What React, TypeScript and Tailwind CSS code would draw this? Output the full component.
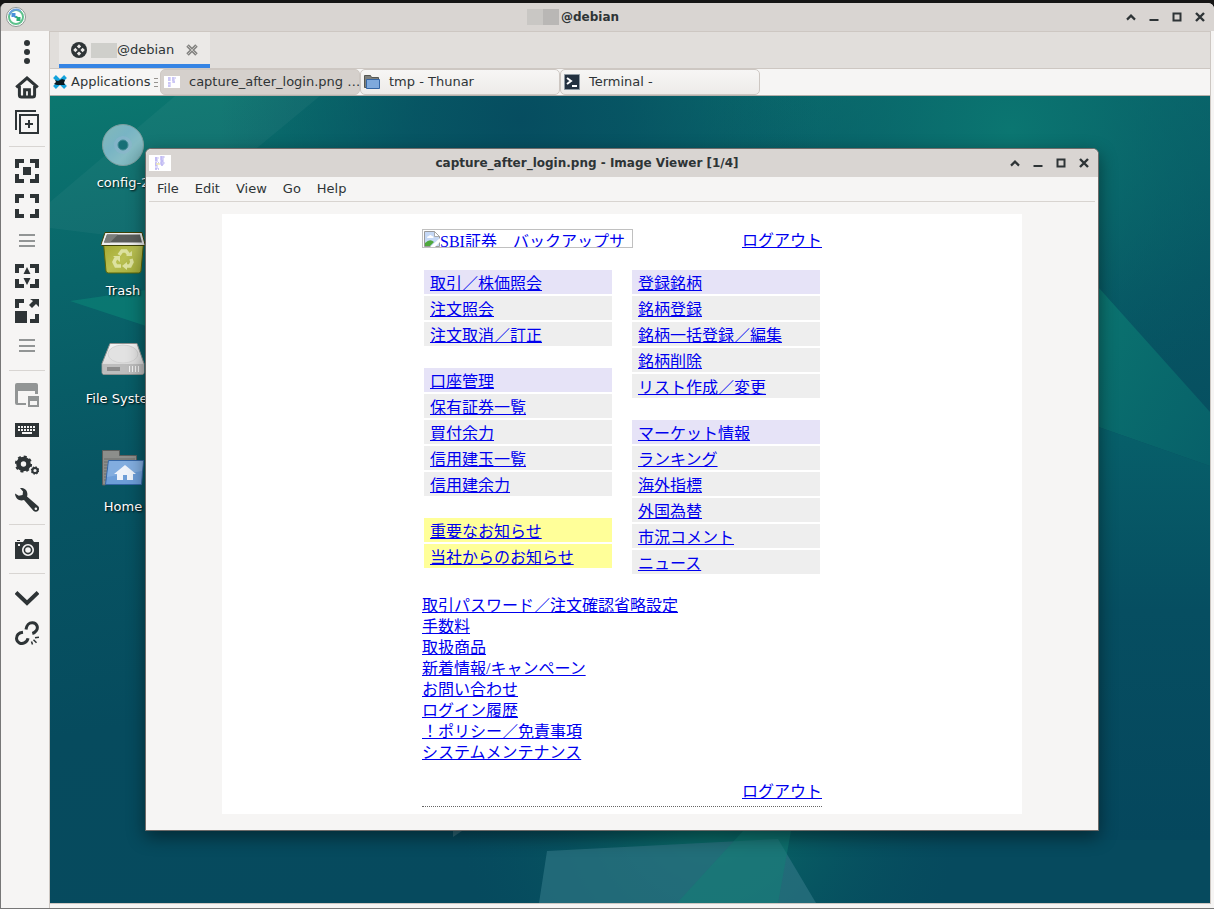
import React from "react";

interface LinkGroupProps {
  links: string[];
  tone?: "menu" | "notice";
}

interface SideButtonProps {
  label: string;
  muted?: boolean;
  children: React.ReactNode;
}

// \uFF0F, \uFF01 and \u3000 are the full-width slash, exclamation mark and space
const tradeLinks = ["取引\uFF0F株価照会", "注文照会", "注文取消\uFF0F訂正"];
const accountLinks = [
  "口座管理",
  "保有証券一覧",
  "買付余力",
  "信用建玉一覧",
  "信用建余力",
];
const noticeLinks = ["重要なお知らせ", "当社からのお知らせ"];
const watchLinks = [
  "登録銘柄",
  "銘柄登録",
  "銘柄一括登録\uFF0F編集",
  "銘柄削除",
  "リスト作成\uFF0F変更",
];
const marketLinks = [
  "マーケット情報",
  "ランキング",
  "海外指標",
  "外国為替",
  "市況コメント",
  "ニュース",
];
const footerLinks = [
  "取引パスワード\uFF0F注文確認省略設定",
  "手数料",
  "取扱商品",
  "新着情報/キャンペーン",
  "お問い合わせ",
  "ログイン履歴",
  "\uFF01ポリシー\uFF0F免責事項",
  "システムメンテナンス",
];

const WindowButtons = () => (
  <div className="flex shrink-0 text-[#2e3436]">
    <button aria-label="Shade" className="flex w-[23px] h-7 items-center justify-center">
      <svg width="10" height="10" viewBox="0 0 10 10" fill="none" stroke="currentColor" strokeWidth="2.2">
        <path d="M1 7.6 L5 3.6 L9 7.6" />
      </svg>
    </button>
    <button aria-label="Minimize" className="flex w-[23px] h-7 items-center justify-center">
      <svg width="10" height="10" viewBox="0 0 10 10" fill="currentColor">
        <path d="M0.5 7h9v2h-9z" />
      </svg>
    </button>
    <button aria-label="Maximize" className="flex w-[23px] h-7 items-center justify-center">
      <svg width="10" height="10" viewBox="0 0 10 10" fill="none" stroke="currentColor" strokeWidth="2">
        <path d="M1.5 1.5h7v7h-7z" />
      </svg>
    </button>
    <button aria-label="Close" className="flex w-[23px] h-7 items-center justify-center">
      <svg width="10" height="10" viewBox="0 0 10 10" fill="none" stroke="currentColor" strokeWidth="2.4">
        <path d="M1 1 L9 9 M9 1 L1 9" />
      </svg>
    </button>
  </div>
);

const Thumbnail = () => (
  <svg className="shrink-0" width="22" height="16" viewBox="0 0 22 16">
    <path fill="#fff" d="M0 0h22v16H0z" />
    <path fill="#dcd9f8" d="M6 2h3v5H6zM6 8h3v6H6zM11 1h4v9h-4z" />
    <path
      stroke="#b9b3f2"
      strokeWidth="1.4"
      strokeDasharray="2 1"
      fill="none"
      d="M6 3h3.5M6 5h3M6 8h4M6 10h3M6 14h4M11.5 2h4M11.5 4h3M12 6h3M11.5 8h4M12 10h3"
    />
    <path stroke="#f0eab0" strokeWidth="1.4" d="M7 9h4" />
  </svg>
);

const SideButton = ({ label, muted, children }: SideButtonProps) => (
  <button
    aria-label={label}
    className={`flex h-[35px] w-full items-center justify-center ${
      muted ? "text-[#929595]" : "text-[#2e3436]"
    }`}
  >
    <svg width="24" height="24" viewBox="0 0 24 24" fill="currentColor">
      {children}
    </svg>
  </button>
);

const SideDivider = () => <div className="mx-1 mt-[7px] mb-1.5 h-px bg-[#d8d5d2]" />;

const Corners = () => (
  <path d="M0 0h9v4H4v5H0zM15 0h9v9h-4V4h-5zM0 15h4v5h5v4H0zM20 15h4v9h-9v-4h5z" />
);

const Grip = () => <path d="M4 5h16v2H4zM4 11h16v2H4zM4 16h16v2H4z" />;

const Sidebar = () => (
  <aside className="w-[49px] shrink-0 border-r border-[#cdc7c2] bg-[#f6f5f4] pt-[3px] pl-1">
    <SideButton label="Menu">
      <circle cx="12" cy="3" r="3" />
      <circle cx="12" cy="12" r="3" />
      <circle cx="12" cy="21" r="3" />
    </SideButton>
    <SideButton label="Home">
      <path
        d="M1.2 12.4 L12 3 L22.8 12.4 M4.4 11v9q0 2 2 2h11.2q2 0 2-2v-9M9.6 21v-6.2h4.8V21"
        fill="none"
        stroke="currentColor"
        strokeWidth="3"
      />
    </SideButton>
    <SideButton label="New connection">
      <path
        d="M1 20V1h20M5 5h18v18H5zM10 14h8M14 10v8"
        fill="none"
        stroke="currentColor"
        strokeWidth="2"
      />
    </SideButton>
    <SideDivider />
    <SideButton label="Resize window">
      <Corners />
      <path d="M8 8h8v8H8z" />
    </SideButton>
    <SideButton label="Fullscreen">
      <Corners />
    </SideButton>
    <SideButton label="Fullscreen options" muted>
      <Grip />
    </SideButton>
    <SideButton label="Dynamic resolution">
      <Corners />
      <path d="M12 3l3.5 7h-7zM12 21l-3.5-7h7z" />
    </SideButton>
    <SideButton label="Scaled mode">
      <path d="M0 0h9v4H4v5H0zM0 12h12v12H0zM20 15h4v9h-9v-4h5zM15 0h9v8l-3-3-4 4-3-3 4-4z" />
    </SideButton>
    <SideButton label="Scaler options" muted>
      <Grip />
    </SideButton>
    <SideDivider />
    <SideButton label="Multi monitor" muted>
      <path d="M2 0h19q2 0 2 2v9h-3V8H3v12h8v2H2q-2 0-2-2V2Q0 0 2 0z" />
      <path fillRule="evenodd" d="M13 13h11v11H13zM15 18v4h7v-4z" />
    </SideButton>
    <SideButton label="Keyboard">
      <path d="M0 5h24v14H0z" />
      <path
        stroke="#f6f5f4"
        strokeWidth="2"
        strokeDasharray="2 1"
        fill="none"
        d="M3 9h18M3 12h18"
      />
      <path stroke="#f6f5f4" strokeWidth="2" d="M7 15h10" />
    </SideButton>
    <SideButton label="Preferences">
      <circle cx="8.5" cy="11" r="5" fill="none" stroke="currentColor" strokeWidth="4.600" />
      <circle
        cx="8.5"
        cy="11"
        r="7.6"
        fill="none"
        stroke="currentColor"
        strokeWidth="2"
        strokeDasharray="3 2.97"
      />
      <circle cx="20" cy="17.5" r="2.6" fill="none" stroke="currentColor" strokeWidth="2" />
      <circle
        cx="20"
        cy="17.5"
        r="3.6"
        fill="none"
        stroke="currentColor"
        strokeWidth="1.2"
        strokeDasharray="1.5 1.33"
      />
    </SideButton>
    <SideButton label="Tools">
      <path
        fillRule="evenodd"
        d="M5 0c4-.6 7.500 2.200 7.400 6.200 0 .9-.1 1.500-.4 2.200l11 9.600c1.600 1.500 1.300 3.600.2 4.800-1.200 1.300-3.400 1.500-4.800-.1L9 12c-4 1.500-8.600-.6-9-6.500l3.800 2.300L7.600 7 8 3.500zM20.800 19.500a1.300 1.300 0 1 0 .1 2.600 1.300 1.300 0 0 0-.1-2.600z"
      />
    </SideButton>
    <SideDivider />
    <SideButton label="Screenshot">
      <path
        fillRule="evenodd"
        d="M0 5h8l2-3h7l2 3h5v17H0zM3 7v2h2V7zM13 7a6 6 0 1 0 .01 0z"
      />
      <path d="M2 3h3v1H2z" />
      <circle cx="13" cy="13" r="3.6" fill="none" stroke="currentColor" strokeWidth="1.6" />
    </SideButton>
    <SideDivider />
    <SideButton label="Minimize session">
      <path d="M1 6.500 L12 17 L23 6.500" fill="none" stroke="currentColor" strokeWidth="4" />
    </SideButton>
    <SideButton label="Disconnect">
      <path
        d="M11 8.500c.5-4 3-7 6.500-6.800 4.500.3 6 5 3.800 8-1 1.500-2.200 2.300-4 2.800M8 11.200c-4 .5-6.500 3-6.500 6.300.2 4 4.500 6 7.800 4.400 2-.9 3.300-2.200 3.700-4.600"
        fill="none"
        stroke="currentColor"
        strokeWidth="3"
      />
      <path
        d="M16.500 20.500l1 3M18.500 18.800l3 3M20 16.800l4-.6"
        fill="none"
        stroke="currentColor"
        strokeWidth="1.5"
      />
    </SideButton>
  </aside>
);

const Wallpaper = () => (
  <svg
    className="absolute inset-0 h-full w-full"
    viewBox="50 96 1160 807"
    preserveAspectRatio="none"
    aria-hidden="true"
  >
    <defs>
      <linearGradient id="base" x1="0" y1="0" x2="0.250" y2="1">
        <stop offset="0" stopColor="#0b776f" />
        <stop offset="0.220" stopColor="#09656a" />
        <stop offset="0.450" stopColor="#075563" />
        <stop offset="0.750" stopColor="#064b5e" />
        <stop offset="1" stopColor="#064a5e" />
      </linearGradient>
      <radialGradient id="dip" gradientUnits="userSpaceOnUse" cx="520" cy="120" r="300">
        <stop offset="0" stopColor="#064d60" />
        <stop offset="0.350" stopColor="#064f61" stopOpacity="0.800" />
        <stop offset="1" stopColor="#064f61" stopOpacity="0" />
      </radialGradient>
      <radialGradient id="glow" gradientUnits="userSpaceOnUse" cx="1010" cy="130" r="290">
        <stop offset="0" stopColor="#0b7671" />
        <stop offset="0.300" stopColor="#0a6f6e" stopOpacity="0.800" />
        <stop offset="1" stopColor="#075a66" stopOpacity="0" />
      </radialGradient>
      <radialGradient id="low" gradientUnits="userSpaceOnUse" cx="710" cy="810" r="250">
        <stop offset="0" stopColor="#0a7069" />
        <stop offset="1" stopColor="#065260" stopOpacity="0" />
      </radialGradient>
      <linearGradient id="shard" x1="0" y1="0" x2="1" y2="1">
        <stop offset="0" stopColor="#0b7570" />
        <stop offset="1" stopColor="#076069" />
      </linearGradient>
      <linearGradient id="side" x1="0" y1="0" x2="0" y2="1">
        <stop offset="0" stopColor="#07606a" />
        <stop offset="0.450" stopColor="#064e61" />
        <stop offset="1" stopColor="#05475d" />
      </linearGradient>
    </defs>
    <path fill="url(#base)" d="M50 96h1160v807H50z" />
    <path fill="url(#dip)" d="M50 96h1160v807H50z" />
    <path fill="url(#glow)" d="M620 96h590v400H620z" />
    <path fill="url(#shard)" d="M1090 278 L1210 412 V466 L1090 424z" />
    <path fill="url(#side)" d="M1090 424 L1210 466 V840 H1090z" />
    <path fill="#fff" opacity="0.040" d="M50 202 L175 96 H320 L146 240 L50 228z" />
    <path fill="#0b8276" opacity="0.650" d="M70 301 L146 290 V326z" />
    <path fill="url(#low)" d="M400 820h600v83H400z" />
    <path fill="#2b7180" opacity="0.750" d="M547 851 L778 839 L816 903 H539z" />
    <path fill="#118075" opacity="0.500" d="M743 831 H791 L778 903 H677z" />
    <path fill="#56858f" opacity="0.500" d="M453 831h9l-9 6z" />
  </svg>
);

const DesktopIcon = ({ label, children }: { label: string; children: React.ReactNode }) => (
  <li className="flex flex-col items-center">
    <svg width="44" height="44" viewBox="0 0 44 44">
      {children}
    </svg>
    <span className="mt-[7px] text-[13px] leading-[17px] whitespace-nowrap text-white [text-shadow:1px_1px_2px_#000]">
      {label}
    </span>
  </li>
);

const DesktopIcons = () => (
  <ul className="absolute top-[27px] left-[23px] flex w-[100px] flex-col gap-10">
    <DesktopIcon label="config-2">
      <defs>
        <linearGradient id="disc" x1="0" y1="0" x2="1" y2="1">
          <stop offset="0" stopColor="#83b9b8" />
          <stop offset="0.400" stopColor="#78b4c4" />
          <stop offset="0.650" stopColor="#86bcc4" />
          <stop offset="1" stopColor="#6ea8ae" />
        </linearGradient>
      </defs>
      <circle cx="22" cy="22" r="20.500" fill="url(#disc)" stroke="#7c9e9f" />
      <circle cx="22" cy="22" r="9" fill="#90b3d0" opacity="0.450" />
      <circle cx="22" cy="22" r="5" fill="#166f76" stroke="#3f8a92" />
    </DesktopIcon>
    <DesktopIcon label="Trash">
      <defs>
        <linearGradient id="bin" x1="0" y1="0" x2="1" y2="1">
          <stop offset="0" stopColor="#a3a72f" />
          <stop offset="0.500" stopColor="#b9c052" />
          <stop offset="1" stopColor="#a0a838" />
        </linearGradient>
      </defs>
      <path fill="url(#bin)" stroke="#5d6407" d="M2.500 12h40l-2.500 28q-.3 2-2.500 2h-30q-2.200 0-2.500-2z" />
      <path fill="#eee" stroke="#3e4206" d="M4 1.500h37l3 12q0 1-1 1H1q-1 0-1-1z" />
      <path fill="#5a5d5b" d="M6 3.500h33l2 8H3z" />
      <path fill="#7b7d7a" d="M6 3.500h11L9 11.500H3z" />
      <g fill="none" stroke="#dde2a0" strokeWidth="3.500">
        <path d="M18 24l3-4h4l3 4M30 28l1 3-2 4h-4M20 35h-5l-2-4 2-4" />
      </g>
      <path fill="#dde2a0" d="M25 25h6v-5zM26 31v8l-5-4zM12 25h7v6z" />
    </DesktopIcon>
    <DesktopIcon label="File System">
      <defs>
        <linearGradient id="drive" x1="0" y1="0" x2="0" y2="1">
          <stop offset="0" stopColor="#f4f4f4" />
          <stop offset="1" stopColor="#cfcfcf" />
        </linearGradient>
      </defs>
      <path fill="url(#drive)" stroke="#8f9190" d="M9 4.500h27l7 20v9q0 2-2 2H3q-2 0-2-2v-9z" />
      <path fill="#bdbdbd" d="M2 25h41v8q0 2-2 2H4q-2 0-2-2z" />
      <ellipse cx="22" cy="15" rx="15" ry="9" fill="#e2e2e2" stroke="#d2d2d2" />
      <path fill="#8b8b8b" d="M6 28h13v4H6z" />
      <path stroke="#f1f1f1" strokeWidth="1" d="M28.500 27v6M31.500 27v6M34.500 27v6M37.500 27v6" />
    </DesktopIcon>
    <DesktopIcon label="Home">
      <path fill="#8c8e8b" stroke="#5c5e5c" d="M1.500 3.500h17v5h17V15L4 38H1.500z" />
      <path stroke="#6a6c6a" d="M3 12h31M3 15h30M3 18h4M3 21h4M3 24h4M3 27h4M3 30h4M3 33h4" />
      <path fill="#6d9ed8" stroke="#3667a6" d="M7.500 13.500h35l-2 24h-36z" />
      <path fill="#8bb3e2" opacity="0.700" d="M8 14h34l-1 10-35 6z" />
      <path fill="#eef3fa" d="M24 18l11 9h-3v6h-6v-5h-4v5h-6v-6h-3z" />
    </DesktopIcon>
  </ul>
);

const LinkGroup = ({ links, tone = "menu" }: LinkGroupProps) => (
  <ul className="flex flex-col gap-0.5">
    {links.map((link, index) => (
      <li
        key={link}
        className={`h-6 px-1.5 leading-7 ${
          tone === "notice"
            ? "bg-[#ffff99]"
            : index === 0
              ? "bg-[#e6e3f7]"
              : "bg-[#eeeeee]"
        }`}
      >
        <a href="#" className="underline">
          {link}
        </a>
      </li>
    ))}
  </ul>
);

const CapturedPage = () => (
  <div className="mx-auto max-w-[800px] bg-white px-4 pt-[15px] pb-[7px] font-['Liberation_Serif','Noto_Sans_CJK_JP',sans-serif] text-base text-[#0000ee]">
    <div className="mx-auto max-w-[400px]">
      <div className="flex items-start justify-between">
        <a
          href="#"
          className="flex h-[19px] w-[211px] overflow-hidden border border-[#c0c0c0] whitespace-nowrap underline"
        >
          <svg className="mt-px ml-px shrink-0" width="16" height="16" viewBox="0 0 16 16">
            <path fill="#c5d8f5" stroke="#9a9a9a" d="M.5.5h10l5 5v10H.5z" />
            <path fill="#fff" d="M3 7q0-2 2-2 1-2 3 0 2 0 1.500 2z" />
            <path fill="#4fa83d" d="M1 15v-3q5-5 9-1l-4 4z" />
            <path fill="#fff" stroke="#9a9a9a" strokeWidth="0.800" d="M10.500.5v5h5z" />
            <path fill="#fff" d="M16 7v4l-5 5H6z" />
          </svg>
          <span className="leading-6">SBI証券{"\u3000"}バックアップサ</span>
        </a>
        <a href="#" className="leading-6 underline">
          ログアウト
        </a>
      </div>
      <div className="mt-[17px] flex items-start gap-5 px-0.5">
        <div className="flex flex-1 flex-col gap-[22px]">
          <LinkGroup links={tradeLinks} />
          <LinkGroup links={accountLinks} />
          <LinkGroup links={noticeLinks} tone="notice" />
        </div>
        <div className="flex flex-1 flex-col gap-[22px]">
          <LinkGroup links={watchLinks} />
          <LinkGroup links={marketLinks} />
        </div>
      </div>
      <ul className="mt-[21px]">
        {footerLinks.map((link) => (
          <li key={link} className="leading-[21px]">
            <a href="#" className="underline">
              {link}
            </a>
          </li>
        ))}
      </ul>
      <div className="mt-[17px] border-b border-dotted border-[#666666] pb-0.5 text-right leading-6">
        <a href="#" className="underline">
          ログアウト
        </a>
      </div>
    </div>
  </div>
);

const ImageViewer = () => (
  <section className="relative rounded-t-md border border-[#6f6b69] bg-[#f6f5f4] shadow-[0_6px_18px_rgba(0,0,0,0.45)]">
    <header className="flex h-7 items-center rounded-t-md bg-[#d9d5d2] px-[3px]">
      <Thumbnail />
      <h1 className="flex-1 text-center text-xs font-bold">
        capture_after_login.png - Image Viewer [1/4]
      </h1>
      <WindowButtons />
    </header>
    <nav className="mx-[3px] flex h-[25px] items-center border-b border-[#d8d4d0] text-[13px]">
      {["File", "Edit", "View", "Go", "Help"].map((item) => (
        <button key={item} className="px-2">
          {item}
        </button>
      ))}
    </nav>
    <div className="px-3 pt-3 pb-4">
      <CapturedPage />
    </div>
  </section>
);

const TaskButton = ({
  label,
  active,
  children,
}: {
  label: string;
  active?: boolean;
  children: React.ReactNode;
}) => (
  <button
    className={`flex h-[26px] w-[200px] items-center rounded-[5px] border border-[#cdc7c2] pl-[3px] text-left ${
      active ? "bg-[#d5d0cc]" : "bg-linear-to-b from-[#f7f6f5] to-[#edebe9]"
    }`}
  >
    <span className="flex w-[25px] shrink-0">{children}</span>
    <span className="whitespace-nowrap">{label}</span>
  </button>
);

const Panel = () => (
  <div className="flex h-[27px] items-center border-b border-[#b5afaa] bg-[#f6f5f4] pl-[3px] text-[13px]">
    <button className="flex w-[107px] items-center gap-1">
      <svg width="14" height="14" viewBox="0 0 14 14">
        <path stroke="#14a3dc" strokeWidth="4" d="M1.500 1.500l11 11M12.500 1.500l-11 11" />
        <path fill="#0b1a20" d="M2 5l3 1 4-2 3 1-1 3 1 2H4L1 9l2-2z" />
      </svg>
      <span>Applications</span>
      <svg width="4" height="11" viewBox="0 0 4 11" stroke="#96938f">
        <path d="M0 1.500h4M0 5.500h4M0 9.500h4" />
      </svg>
    </button>
    <TaskButton label="capture_after_login.png …" active>
      <svg width="16" height="12" viewBox="0 0 16 12">
        <path fill="#fff" d="M0 0h16v12H0z" />
        <path fill="#dcd9f8" d="M4 1h3v4H4zM4 6h3v5H4zM8 1h3v6H8z" />
        <path
          stroke="#b9b3f2"
          strokeWidth="1.200"
          strokeDasharray="2 1"
          fill="none"
          d="M4 2h3M4 4h3M4 7h3M4 10h3M8 2h4M8 4h3M9 6h3"
        />
      </svg>
    </TaskButton>
    <TaskButton label="tmp - Thunar">
      <svg width="16" height="16" viewBox="0 0 16 16">
        <path fill="#7d7f7c" stroke="#555753" d="M.5 1.500h6l1 2h7v10H.5z" />
        <path fill="#7fa9dc" stroke="#3465a4" d="M2.500 5.500h13v9h-13z" />
      </svg>
    </TaskButton>
    <TaskButton label="Terminal -">
      <svg width="16" height="16" viewBox="0 0 16 16">
        <path fill="#233140" stroke="#8f9aa3" strokeWidth="1" d="M.5.5h15v15H.5z" />
        <path fill="none" stroke="#fff" strokeWidth="2" d="M3 4l4 3-4 3M8 12h5" />
      </svg>
    </TaskButton>
  </div>
);

const TabBar = () => (
  <div className="flex h-[37px] border-b border-[#cdc7c2] bg-[#e1dedb] pl-[9px]">
    <div className="flex w-[151px] items-center border-b-4 border-[#3584e4] bg-[#ebe9e7] pt-1 pl-3 text-[13px]">
      <svg width="16" height="16" viewBox="0 0 16 16">
        <circle cx="8" cy="8" r="8" fill="#2e3436" />
        <path
          fill="#ebe9e7"
          d="M8 2.200l2.200 2.200L8 6.600 5.800 4.400zM8 9.400l2.200 2.200L8 13.800l-2.200-2.200zM4.400 5.800L6.600 8l-2.200 2.200L2.200 8zM11.600 5.800L13.800 8l-2.200 2.200L9.400 8z"
        />
      </svg>
      <span className="ml-1 h-[15px] w-[26px] bg-[#cfcfcb]" />
      <span>@debian</span>
      <button aria-label="Close tab" className="ml-3">
        <svg width="12" height="12" viewBox="0 0 12 12" fill="none">
          <path stroke="#858583" strokeWidth="3.500" d="M1.500 1.500l9 9M10.500 1.500l-9 9" />
          <path stroke="#c4c2bf" strokeWidth="1" d="M2 2l8 8M10 2l-8 8" />
        </svg>
      </button>
    </div>
  </div>
);

export default function App() {
  return (
    <div className="flex min-h-screen flex-col bg-[#151515] pt-[3px] font-['DejaVu_Sans',sans-serif] text-[#2e3436]">
      <div className="flex flex-1 flex-col overflow-hidden rounded-t-md border-b border-l border-[#777777] bg-[#f6f5f4]">
        <header className="flex h-[28px] items-center bg-[#d9d5d2] pr-[3px] pl-1">
          <svg className="shrink-0" width="22" height="22" viewBox="0 0 22 22" fill="none">
            <circle cx="11" cy="11" r="9.500" fill="#fff" stroke="#8d9692" />
            <circle cx="11" cy="11" r="7" stroke="#5fc28d" strokeWidth="2" />
            <path stroke="#6a9fe0" strokeWidth="2" d="M4.500 8.500a7 7 0 0 1 11-3.500" />
            <path stroke="#4a90d9" strokeWidth="2" d="M7.500 8l3.500 3.500M7.500 11V8h3" />
            <path stroke="#2fae74" strokeWidth="2" d="M14.500 14L11 10.500M14.500 11v3h-3" />
          </svg>
          <h2 className="flex flex-1 items-center justify-center text-xs font-bold">
            <span className="h-4 w-4 bg-[#c9c7c4]" />
            <span className="mr-0.5 h-4 w-4 bg-[#b9b7b5]" />
            @debian
          </h2>
          <WindowButtons />
        </header>
        <div className="flex flex-1">
          <Sidebar />
          <main className="mr-[3px] mb-1 flex min-w-0 flex-1 flex-col border-t border-r border-b border-[#cdc7c2]">
            <TabBar />
            <Panel />
            <div className="relative flex-1 overflow-hidden pt-[52px] pr-[111px] pb-[71px] pl-[95px]">
              <Wallpaper />
              <DesktopIcons />
              <ImageViewer />
            </div>
          </main>
        </div>
      </div>
    </div>
  );
}
